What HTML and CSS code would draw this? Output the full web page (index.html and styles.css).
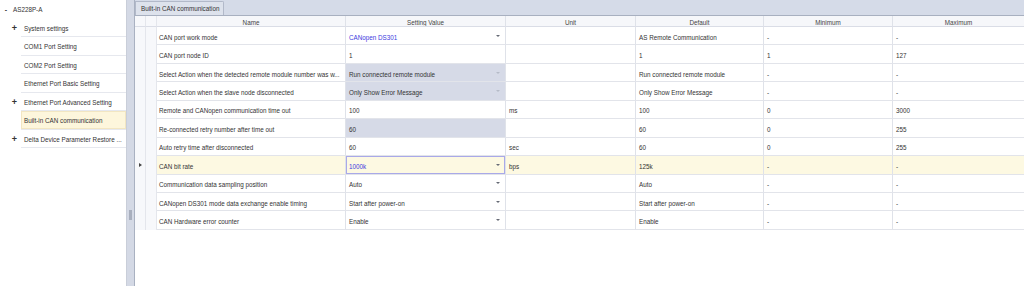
FILE: index.html
```html
<!DOCTYPE html>
<html lang="en">
  <head>
    <meta charset="utf-8" />
    <title>Built-in CAN communication</title>
    <link rel="stylesheet" href="styles.css">
  </head>
  <body>
    <div class="app">
      <aside class="tree">
        <div class="node root"><span class="exp minus">-</span><span class="label">AS228P-A</span></div>
        <div class="node"><span class="exp">+</span><span class="label">System settings</span></div>
        <div class="node"><span class="exp"></span><span class="label">COM1 Port Setting</span></div>
        <div class="node"><span class="exp"></span><span class="label">COM2 Port Setting</span></div>
        <div class="node"><span class="exp"></span><span class="label">Ethernet Port Basic Setting</span></div>
        <div class="node"><span class="exp">+</span><span class="label">Ethernet Port Advanced Setting</span></div>
        <div class="node selected"><span class="exp"></span><span class="label">Built-in CAN communication</span></div>
        <div class="node"><span class="exp">+</span><span class="label">Delta Device Parameter Restore ...</span></div>
      </aside>

      <div class="splitter"><span class="grip"></span></div>

      <main class="doc">
        <div class="tabs">
          <div class="tab">Built-in CAN communication</div>
        </div>

        <div class="grid">
          <div class="row head">
            <div class="ind"></div>
            <div class="indent"></div>
            <div class="cell name">Name</div>
            <div class="cell">Setting Value</div>
            <div class="cell">Unit</div>
            <div class="cell">Default</div>
            <div class="cell">Minimum</div>
            <div class="cell">Maximum</div>
          </div>

          <div class="row">
            <div class="ind"></div><div class="indent"></div>
            <div class="cell name">CAN port work mode</div>
            <div class="cell combo blue">CANopen DS301</div>
            <div class="cell"></div>
            <div class="cell">AS Remote Communication</div>
            <div class="cell">-</div>
            <div class="cell">-</div>
          </div>

          <div class="row">
            <div class="ind"></div><div class="indent"></div>
            <div class="cell name">CAN port node ID</div>
            <div class="cell">1</div>
            <div class="cell"></div>
            <div class="cell">1</div>
            <div class="cell">1</div>
            <div class="cell">127</div>
          </div>

          <div class="row">
            <div class="ind"></div><div class="indent"></div>
            <div class="cell name">Select Action when the detected remote module number was w...</div>
            <div class="cell combo off">Run connected remote module</div>
            <div class="cell"></div>
            <div class="cell">Run connected remote module</div>
            <div class="cell">-</div>
            <div class="cell">-</div>
          </div>

          <div class="row">
            <div class="ind"></div><div class="indent"></div>
            <div class="cell name">Select Action when the slave node disconnected</div>
            <div class="cell combo off">Only Show Error Message</div>
            <div class="cell"></div>
            <div class="cell">Only Show Error Message</div>
            <div class="cell">-</div>
            <div class="cell">-</div>
          </div>

          <div class="row">
            <div class="ind"></div><div class="indent"></div>
            <div class="cell name">Remote and CANopen communication time out</div>
            <div class="cell">100</div>
            <div class="cell">ms</div>
            <div class="cell">100</div>
            <div class="cell">0</div>
            <div class="cell">3000</div>
          </div>

          <div class="row">
            <div class="ind"></div><div class="indent"></div>
            <div class="cell name">Re-connected retry number after time out</div>
            <div class="cell off">60</div>
            <div class="cell"></div>
            <div class="cell">60</div>
            <div class="cell">0</div>
            <div class="cell">255</div>
          </div>

          <div class="row">
            <div class="ind"></div><div class="indent"></div>
            <div class="cell name">Auto retry time after disconnected</div>
            <div class="cell">60</div>
            <div class="cell">sec</div>
            <div class="cell">60</div>
            <div class="cell">0</div>
            <div class="cell">255</div>
          </div>

          <div class="row current">
            <div class="ind"><span class="arrow"></span></div><div class="indent"></div>
            <div class="cell name">CAN bit rate</div>
            <div class="cell combo blue focus">1000k</div>
            <div class="cell">bps</div>
            <div class="cell">125k</div>
            <div class="cell">-</div>
            <div class="cell">-</div>
          </div>

          <div class="row">
            <div class="ind"></div><div class="indent"></div>
            <div class="cell name">Communication data sampling position</div>
            <div class="cell combo">Auto</div>
            <div class="cell"></div>
            <div class="cell">Auto</div>
            <div class="cell">-</div>
            <div class="cell">-</div>
          </div>

          <div class="row">
            <div class="ind"></div><div class="indent"></div>
            <div class="cell name">CANopen DS301 mode data exchange enable timing</div>
            <div class="cell combo">Start after power-on</div>
            <div class="cell"></div>
            <div class="cell">Start after power-on</div>
            <div class="cell">-</div>
            <div class="cell">-</div>
          </div>

          <div class="row">
            <div class="ind"></div><div class="indent"></div>
            <div class="cell name">CAN Hardware error counter</div>
            <div class="cell combo">Enable</div>
            <div class="cell"></div>
            <div class="cell">Enable</div>
            <div class="cell">-</div>
            <div class="cell">-</div>
          </div>
        </div>
      </main>
    </div>
  </body>
</html>
```

FILE: styles.css
```css
html,
body {
  margin: 0;
  height: 100%;
  background: #ffffff;
}

body {
  font-family: "Liberation Sans", Arial, sans-serif;
  font-size: 6.3px;
  color: #333333;
  overflow: hidden;
}

.app {
  display: flex;
  height: 286px;
}

/* left tree */

.tree {
  width: 126px;
  border-right: 1px solid #c9ced9;
  background: #ffffff;
  flex: none;
}

.node {
  display: flex;
  height: 18.5px;
}

.node .exp {
  width: 21px;
  flex: none;
  display: flex;
  align-items: center;
  justify-content: center;
  padding-left: 8px;
  padding-top: 1px;
  box-sizing: border-box;
  font-size: 9px;
  font-weight: bold;
  color: #333333;
}

.node .label {
  flex: 1;
  min-width: 0;
  display: block;
  padding: 1px 4px 0 3px;
  line-height: 17.5px;
  border-bottom: 1px solid #e6e8ee;
  white-space: nowrap;
  overflow: hidden;
}

.root .exp {
  width: 12px;
  padding-left: 0;
  font-size: 7px;
}

.root .label {
  padding-left: 1px;
  border-bottom: none;
}

.selected .label {
  background: #fdf6dc;
  box-shadow: inset 0 0 0 1px #f2e6c2;
}

/* splitter */

.splitter {
  width: 8px;
  flex: none;
  background: #d4d9e5;
  border-right: 1px solid #a9b1c1;
  display: flex;
  align-items: center;
  justify-content: center;
  padding-top: 144px;
  box-sizing: border-box;
}

.grip {
  width: 3px;
  height: 10px;
  background-image: radial-gradient(circle, #a5acbb 0.7px, transparent 0.8px);
  background-size: 2px 2px;
}

/* document area */

.doc {
  flex: 1;
  min-width: 0;
  display: flex;
  flex-direction: column;
}

.tabs {
  height: 15px;
  background: #d5dbe8;
  border-bottom: 1px solid #a8b0c0;
  display: flex;
  align-items: flex-end;
  flex: none;
}

.tab {
  height: 14px;
  line-height: 14px;
  padding: 0 6px 0 5px;
  background: #dde2ec;
  border: 1px solid #b2b9c9;
  border-bottom: none;
  border-top-right-radius: 2px;
  box-sizing: border-box;
  width: 89px;
  white-space: nowrap;
}

.grid {
  --cols: 11px 11px 189px 160px 130px 128px 129px 1fr;
}

.row {
  display: grid;
  grid-template-columns: var(--cols);
  height: 18.45px;
}

.row .ind,
.row .indent {
  background: #f7f8fb;
  border-right: 1px solid #e4e6ec;
  display: flex;
  align-items: center;
  justify-content: center;
}

.row .cell {
  display: flex;
  align-items: center;
  padding: 3px 3px 0;
  border-right: 1px solid #dfe2e9;
  border-bottom: 1px solid #e2e4ea;
  white-space: nowrap;
  overflow: hidden;
  min-width: 0;
  position: relative;
  box-sizing: border-box;
}

.row .cell.name {
  padding-left: 2px;
  padding-right: 2px;
}

.row .cell:last-child {
  border-right: none;
}

.row.head {
  height: 11px;
  background: #f6f7fa;
}

.row.head .cell {
  justify-content: center;
  color: #444444;
  padding-top: 2px;
  border-bottom: 1px solid #dadde6;
}

.row.head .ind,
.row.head .indent {
  border-bottom: 1px solid #dadde6;
}

.cell.combo::after {
  content: "";
  position: absolute;
  right: 5px;
  top: 50%;
  margin-top: -1px;
  border-left: 2px solid transparent;
  border-right: 2px solid transparent;
  border-top: 2px solid #666a75;
}

.cell.off {
  background: #d6dae7;
}

.cell.combo.off::after {
  border-top-color: #b6bbc8;
}

.cell.blue {
  color: #3c3ce0;
}

.row.current .cell {
  background: #fdf9e2;
}

.row.current .cell.focus {
  box-shadow: inset 0 0 0 1px #a9a9e8;
}

.arrow {
  border-top: 2px solid transparent;
  border-bottom: 2px solid transparent;
  border-left: 3px solid #444444;
}
```
